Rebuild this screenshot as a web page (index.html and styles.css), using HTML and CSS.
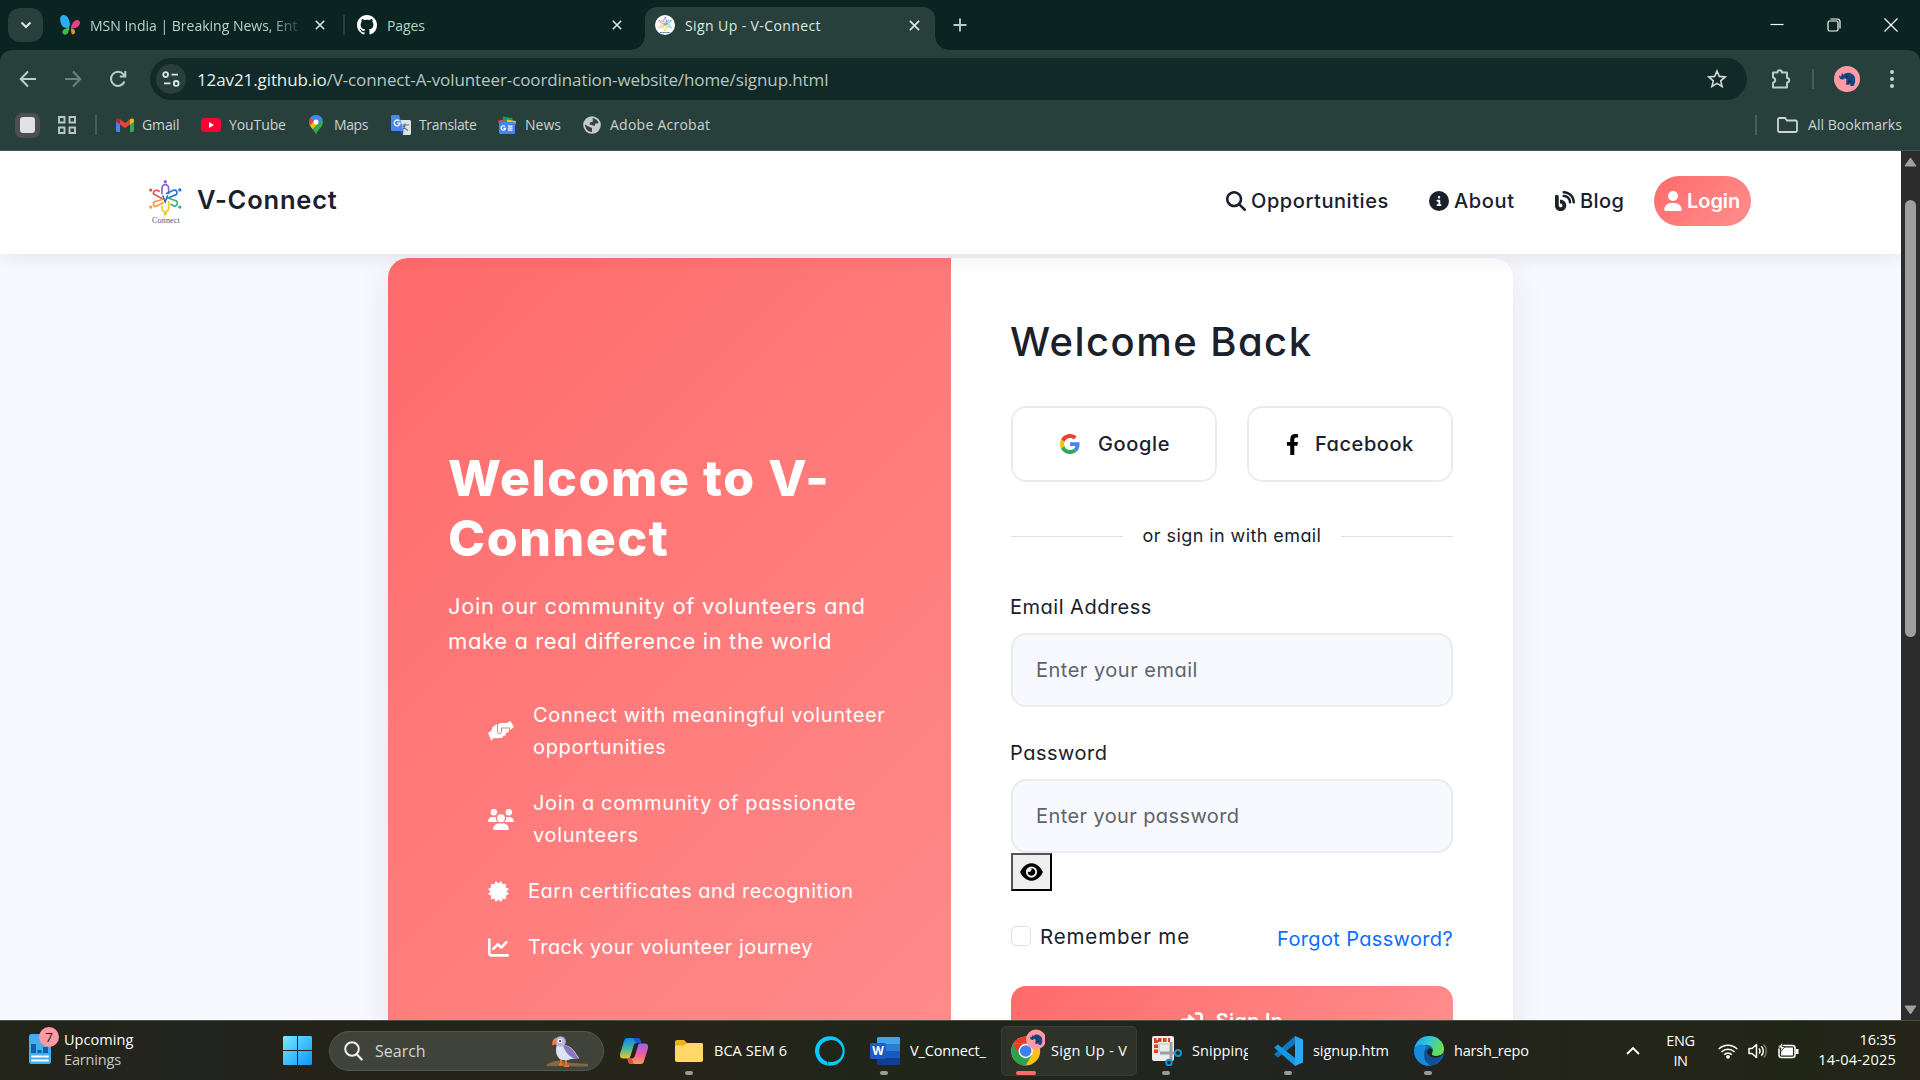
FILE: index.html
```
<!DOCTYPE html>
<html lang="en">
<head>
<meta charset="utf-8">
<title>Sign Up - V-Connect</title>
<link rel="stylesheet" href="styles.css">
</head>
<body>
<svg width="0" height="0" class="defs" aria-hidden="true">
  <defs>
    <symbol id="x" viewBox="0 0 10 10"><path d="M.8 .8 9.2 9.2M9.2 .8 .8 9.2" fill="none" stroke="currentColor" stroke-width="1.6"/></symbol>
    <symbol id="logo" viewBox="0 0 34 36">
      <g fill="none" stroke-width="1.7" stroke-linecap="round">
        <path stroke="#8d63cf" d="M14 14V8.500a3.300 3.300 0 0 1 6.600 0V14"/>
        <path stroke="#dc5750" d="M14 19 5.500 14.500A3 3 0 0 1 9 10.800l2 .8"/>
        <path stroke="#1e76d6" d="M18.500 14 26.500 10.300a2.900 2.900 0 0 1 1.800 4.700L20 18.500"/>
        <path stroke="#eda03b" d="M14.500 20 6.500 22.200a2.900 2.900 0 0 0 1 5l7.500-4"/>
        <path stroke="#3fae83" d="M20 18.500 28.500 21.500a2.900 2.900 0 0 1-2.500 5l-3-1.500"/>
        <path stroke="#efcb30" d="M14 26.500v2.500a3.300 3.300 0 0 0 6.600 0v-7"/>
        <path stroke="#295b98" stroke-width="1.400" d="M15 16.500l2.200 6 2.200-6"/>
      </g>
      <circle cx="17.300" cy="2.300" r="1.700" fill="#8d63cf"/><circle cx="2.700" cy="10.600" r="1.700" fill="#dc5750"/><circle cx="31.800" cy="10.400" r="1.700" fill="#1e76d6"/>
      <circle cx="2.700" cy="27.600" r="1.700" fill="#eda03b"/><circle cx="31.800" cy="27.600" r="1.700" fill="#3fae83"/><circle cx="17.300" cy="34.300" r="1.700" fill="#efcb30"/>
    </symbol>
    <symbol id="rhino" viewBox="0 0 26 26"><circle cx="13" cy="13" r="13" fill="#ff9ba3"/><path d="M5 9.500l2 1 1-3.500 1.500 1.700C11 6.500 15.500 5.800 18 8c3 1 3.500 5 3 8.500L19.500 20h-3l-.5-2.500-1.500 1.500-2.500-.5.500-5.500-2-.5-1.500 1C6.500 14 5 12 5 9.500z" fill="#17457f"/><path d="M12 10.500l2 .5m0 5 3-1" stroke="#0b203d"/></symbol>
  </defs>
</svg>

<div class="tabstrip">
  <div class="tab-search"><svg width="12" height="8" viewBox="0 0 12 8"><path d="M1.500 1.500 6 6l4.500-4.500" fill="none" stroke="#dfe9e5" stroke-width="2"/></svg></div>
  <div class="tab tab-first">
    <svg width="20" height="20" viewBox="0 0 20 20"><path d="M10 9C9 3 7 0 3.500 0 0 0-.5 4 .8 8c1 4 4.500 5.300 8.200 5z" fill="#28aef2"/><path d="M9.500 13C5 13 2 15 2.500 17.500 3 20 6 20.500 8 18z" fill="#41bd4c"/><path d="M11 13c.5-5 4-8.500 7-8 3 1 2.300 5-.5 7-2 1.500-4 1.500-6.500 1z" fill="#ee3f84"/><path d="M10.700 13.500c2-.5 4.500 1 4.300 3.500-.3 2.500-2.500 3-3.500 1.500z" fill="#f88b30"/></svg>
    <span class="tab-title fade">MSN India | Breaking News, Ent</span>
    <svg class="tab-x" width="10" height="10"><use href="#x"/></svg>
  </div>
  <i class="tab-sep"></i>
  <div class="tab tab-second">
    <svg width="20" height="20" viewBox="0 0 16 16" fill="#fff"><path d="M8 0C3.580 0 0 3.580 0 8c0 3.540 2.290 6.530 5.470 7.590.4.070.55-.17.55-.38 0-.19-.01-.82-.01-1.490-2.010.37-2.530-.49-2.690-.94-.09-.23-.48-.94-.82-1.130-.28-.15-.68-.52-.01-.53.63-.01 1.080.58 1.230.82.72 1.210 1.870.87 2.330.66.07-.52.28-.87.51-1.070-1.780-.2-3.640-.89-3.640-3.950 0-.87.31-1.590.82-2.150-.08-.2-.36-1.020.08-2.120 0 0 .67-.21 2.200.82.64-.18 1.320-.27 2-.27.68 0 1.360.09 2 .27 1.530-1.040 2.200-.82 2.200-.82.44 1.100.16 1.920.08 2.120.51.56.82 1.270.82 2.150 0 3.070-1.870 3.750-3.650 3.950.29.25.54.73.54 1.480 0 1.070-.01 1.930-.01 2.200 0 .21.15.46.55.38A8.013 8.013 0 0016 8c0-4.420-3.580-8-8-8z"/></svg>
    <span class="tab-title">Pages</span>
    <svg class="tab-x" width="10" height="10"><use href="#x"/></svg>
  </div>
  <div class="tab tab-active">
    <svg width="20" height="20" viewBox="0 0 20 20"><circle cx="10" cy="10" r="10" fill="#fff"/><use href="#logo" x="3" y="1.500" width="14" height="14.500"/><path d="M5 17.500h10" stroke="#7096bd"/></svg>
    <span class="tab-title">Sign Up - V-Connect</span>
    <svg class="tab-x" width="11" height="11"><use href="#x"/></svg>
  </div>
  <svg class="new-tab" width="14" height="14" viewBox="0 0 14 14"><path d="M7 .5v13M.5 7h13" stroke="#b9d3cb" stroke-width="1.800"/></svg>
  <div class="win-controls">
    <svg width="14" height="14" viewBox="0 0 14 14"><path d="M.5 6.500h13" stroke="#fff" stroke-width="1.200"/></svg>
    <svg width="14" height="14" viewBox="0 0 14 14" fill="none" stroke="#fff" stroke-width="1.200"><rect x="1" y="3" width="10" height="10" rx="1.500"/><path d="M3.500 1h7A2.500 2.500 0 0 1 13 3.500v7"/></svg>
    <svg width="14" height="14" viewBox="0 0 14 14"><path d="M.5.5l13 13M13.500.5l-13 13" stroke="#fff" stroke-width="1.200"/></svg>
  </div>
</div>

<div class="browser-bars">
  <div class="toolbar">
    <svg class="tb-icon" width="18" height="18" viewBox="0 0 18 18"><path d="M17 9H2M9 1.500 1.700 9 9 16.500" fill="none" stroke="#b4d0c8" stroke-width="2"/></svg>
    <svg class="tb-icon" width="18" height="18" viewBox="0 0 18 18"><path d="M1 9h15M9 1.500 16.300 9 9 16.500" fill="none" stroke="#6d827c" stroke-width="2"/></svg>
    <svg class="tb-icon" width="18" height="18" viewBox="0 0 18 18"><path d="M15.500 11.500A7 7 0 1 1 14.500 4.500L16 6.200M16.300 1v5.500h-5.500" fill="none" stroke="#b4d0c8" stroke-width="2"/></svg>
    <div class="omnibox">
      <div class="tune"><svg width="18" height="16" viewBox="0 0 18 16" fill="none" stroke="#dce8e4" stroke-width="1.800"><circle cx="3.600" cy="3.600" r="2.400"/><path d="M9.500 3.600H16M2 12.400h6.500"/><circle cx="14.200" cy="12.400" r="2.400"/></svg></div>
      <span class="url"><b>12av21.github.io</b>/V-connect-A-volunteer-coordination-website/home/signup.html</span>
      <svg class="star" width="20" height="20" viewBox="0 0 20 20"><path d="M10 2l2.300 5.400 5.900.5-4.500 3.900 1.400 5.700L10 14.400l-5.100 3.100 1.400-5.700L1.800 7.900l5.900-.5z" fill="none" stroke="#cfd9d6" stroke-width="1.600"/></svg>
    </div>
    <div class="tb-right">
      <svg width="22" height="22" viewBox="0 0 22 22"><path d="M3 4.500h4.500a2.200 2.200 0 0 1 4.400 0H17V10a2.200 2.200 0 0 1 0 4.400V19.500H3v-4.800a2.700 2.700 0 0 0 0-5.300z" fill="none" stroke="#b4d0c8" stroke-width="2" stroke-linejoin="round"/></svg>
      <i class="v-sep"></i>
      <svg class="avatar" width="26" height="26"><use href="#rhino"/></svg>
      <svg width="6" height="20" viewBox="0 0 6 20" fill="#c3d6d0"><circle cx="3" cy="3" r="2"/><circle cx="3" cy="10" r="2"/><circle cx="3" cy="17" r="2"/></svg>
    </div>
  </div>
  <div class="bookmarks">
    <div class="bm-square"><i></i></div>
    <svg class="bm-apps" width="18" height="18" viewBox="0 0 18 18" fill="none" stroke="#bcc8c4" stroke-width="1.900"><path d="M1 1h5.500v5.500H1zM11.500 1H17v5.500h-5.500zM1 11.500h5.500V17H1zM11.500 11.500H17V17h-5.500z"/></svg>
    <i class="v-sep"></i>
    <div class="bm bm-gmail"><svg width="18" height="14" viewBox="0 0 18 14"><path d="M0 2v10.800c0 .7.500 1.200 1.200 1.200H4V5z" fill="#4285f4"/><path d="M18 2v10.800c0 .7-.5 1.200-1.200 1.200H14V5z" fill="#34a853"/><path d="M4 1.200 9 5l5-3.800V6.500L9 10.300 4 6.500z" fill="#ea4335"/><path d="M14 1.200C16 0 18 .5 18 2.500v1L14 6.500z" fill="#fbbc04"/><path d="M4 1.200C2 0 0 .5 0 2.500v1l4 3z" fill="#c5221f"/></svg><span>Gmail</span></div>
    <div class="bm bm-youtube"><svg width="20" height="14" viewBox="0 0 20 14"><rect width="20" height="14" rx="3.500" fill="#ff0033"/><path d="M8 4v6l5-3z" fill="#fff"/></svg><span>YouTube</span></div>
    <div class="bm bm-maps"><svg width="14" height="20" viewBox="0 0 14 20"><path d="M7 20C6.300 15 0 12.500 0 7a7 7 0 0 1 14 0c0 5.500-6.300 8-7 13z" fill="#34a853"/><path d="M1.500 2.700A7 7 0 0 1 9.500.5L5 6z" fill="#1a73e8"/><path d="M1.500 2.700A7 7 0 0 0 1 10l4-4.500z" fill="#ea4335"/><path d="M1 10.200 9 3l3.500 1.500-8.800 9.500A11 11 0 0 1 1 10.200z" fill="#fbbc04"/><path d="M1.500 2.700A7 7 0 0 1 13.500 4.500L9 9 4 5z" fill="#4285f4"/><circle cx="7" cy="7" r="2.500" fill="#fff"/></svg><span>Maps</span></div>
    <div class="bm bm-translate"><svg width="20" height="20" viewBox="0 0 20 20"><path d="M7 5h11.500c.8 0 1.500.7 1.500 1.500v12c0 .8-.7 1.500-1.500 1.500H12z" fill="#dfe3e8"/><path d="M10.500 10h7.500M14 8.500V10c0 2-1.500 4-3 5m1-4c1 2 3 3.500 5 4.500" stroke="#5f6d77" fill="none" stroke-width="1.200"/><path d="M1.500 0H8l4.500 16H1.500C.7 16 0 15.300 0 14.500v-13C0 .7.700 0 1.500 0z" fill="#4688f1"/><path d="M8.500 16h4L12 20z" fill="#2256b8"/><path d="M8.300 6A2.900 2.900 0 1 0 9 8.200H6.200" stroke="#fff" fill="none" stroke-width="1.300"/></svg><span>Translate</span></div>
    <div class="bm bm-news"><svg width="18" height="19" viewBox="0 -2 18 19"><path d="M5 -1.500 14.500 0 14 6H4z" fill="#0c9d58"/><path d="M0 2.500l8-1v5H1z" fill="#ea4335"/><path d="M9 1.500l9 1.500-1 5H9z" fill="#ffc107"/><rect x="1" y="4" width="16" height="12" rx="1.500" fill="#4285f4"/><path d="M7 8.500A2.200 2.200 0 1 0 7.500 10.300H5.500M10 8.200h4.500M10 10.200h4.500M10 12.200h4.500" stroke="#fff" stroke-width="1.200" fill="none"/></svg><span>News</span></div>
    <div class="bm bm-adobe"><svg width="18" height="18" viewBox="0 0 18 18"><circle cx="9" cy="9" r="8.800" fill="#c3c9cc"/><path d="M9.500 2.200c2.500 0 5.500 2 6.200 5l-3.200.3-1 2.500-3-1-2-.5.500-2 3-1z" fill="#34433f"/><path d="M2 8.500l4.500 2.500 2.500 1v4C5 16 2 12.500 2 8.500z" fill="#34433f"/></svg><span>Adobe Acrobat</span></div>
    <div class="bm-all">
      <i class="v-sep"></i>
      <svg width="21" height="16" viewBox="0 0 21 16"><path d="M1 2.500C1 1.700 1.700 1 2.500 1H8l2 2.500h8.500c.8 0 1.500.7 1.500 1.500v8.500c0 .8-.7 1.500-1.500 1.500h-16C1.700 15 1 14.300 1 13.500z" fill="none" stroke="#cbd6d2" stroke-width="1.800"/></svg>
      <span>All Bookmarks</span>
    </div>
  </div>
</div>

<div class="viewport">
  <div class="page">
    <header class="site-header">
      <div class="brand">
        <div class="brand-mark"><svg width="34" height="37"><use href="#logo"/></svg><span>Connect</span></div>
        <span class="brand-name">V-Connect</span>
      </div>
      <nav class="site-nav">
        <a class="nav-opp"><svg width="20" height="20" viewBox="0 0 512 512"><path d="M416 208c0 45.900-14.900 88.300-40 122.700L502.600 457.400c12.500 12.500 12.500 32.800 0 45.300s-32.800 12.500-45.300 0L330.700 376c-34.400 25.200-76.800 40-122.700 40C93.100 416 0 322.900 0 208S93.100 0 208 0S416 93.100 416 208zM208 352a144 144 0 1 0 0-288 144 144 0 1 0 0 288z"/></svg><span>Opportunities</span></a>
        <a class="nav-about"><svg width="20" height="20" viewBox="0 0 512 512"><path d="M256 512A256 256 0 1 0 256 0a256 256 0 1 0 0 512zM216 336h24V272H216c-13.300 0-24-10.700-24-24s10.700-24 24-24h48c13.300 0 24 10.700 24 24v88h8c13.300 0 24 10.700 24 24s-10.700 24-24 24H216c-13.300 0-24-10.700-24-24s10.700-24 24-24zm40-208a32 32 0 1 1 0 64 32 32 0 1 1 0-64z"/></svg><span>About</span></a>
        <a class="nav-blog"><svg width="20" height="20" viewBox="0 0 512 512"><path d="M192 32c0 17.700 14.300 32 32 32c123.700 0 224 100.300 224 224c0 17.700 14.300 32 32 32s32-14.300 32-32C512 128.900 383.100 0 224 0c-17.700 0-32 14.300-32 32zm0 96c0 17.700 14.300 32 32 32c70.700 0 128 57.300 128 128c0 17.700 14.300 32 32 32s32-14.300 32-32c0-106-86-192-192-192c-17.700 0-32 14.300-32 32zM96 144c0-26.500-21.500-48-48-48S0 117.500 0 144V368c0 79.500 64.500 144 144 144s144-64.500 144-144s-64.500-144-144-144H128v96h16c26.500 0 48 21.500 48 48s-21.500 48-48 48s-48-21.500-48-48V144z"/></svg><span>Blog</span></a>
        <a class="nav-login"><svg width="18" height="20" viewBox="0 0 448 512"><path d="M224 256A128 128 0 1 0 224 0a128 128 0 1 0 0 256zm-45.700 48C79.800 304 0 383.800 0 482.300C0 498.700 13.300 512 29.700 512H418.300c16.400 0 29.700-13.300 29.700-29.700C448 383.800 368.200 304 269.700 304H178.300z"/></svg><span>Login</span></a>
      </nav>
    </header>

    <main class="card">
      <section class="intro">
        <h1>Welcome to V-<br>Connect</h1>
        <p>Join our community of volunteers and<br>make a real difference in the world</p>
        <ul>
          <li><svg width="26" height="20" viewBox="0 0 26 20"><path d="M0 12 3.500 9.500 4.500 6 9 3v7.500a2.500 2.500 0 0 0 5 0V7.500h7V10l-1 1.500-2 .5-.5 2.500-2 .5-1.500 2-9 .3L3.500 20z"/><path d="M10 3.500 12.500 2h6L22.500 0 26 6l-4 3V6.500h-9v4a1.500 1.500 0 0 1-3 0z"/></svg><span>Connect with meaningful volunteer<br>opportunities</span></li>
          <li><svg width="26" height="21" viewBox="0 0 640 512"><path d="M144 0a80 80 0 1 1 0 160A80 80 0 1 1 144 0zM512 0a80 80 0 1 1 0 160A80 80 0 1 1 512 0zM0 298.700C0 239.800 47.800 192 106.700 192h42.700c15.900 0 31 3.500 44.600 9.700c-1.300 7.200-1.900 14.700-1.900 22.300c0 38.200 16.800 72.500 43.300 96c-.2 0-.4 0-.7 0H21.300C9.600 320 0 310.400 0 298.700zM405.300 320c-.2 0-.4 0-.7 0c26.600-23.500 43.300-57.800 43.300-96c0-7.600-.7-15-1.900-22.300c13.600-6.300 28.700-9.700 44.600-9.700h42.700C592.200 192 640 239.800 640 298.700c0 11.800-9.600 21.300-21.300 21.300H405.300zM224 224a96 96 0 1 1 192 0 96 96 0 1 1 -192 0zM128 485.300C128 411.700 187.700 352 261.300 352H378.700C452.300 352 512 411.700 512 485.300c0 14.700-11.900 26.700-26.700 26.700H154.700c-14.700 0-26.700-11.900-26.700-26.700z"/></svg><span>Join a community of passionate<br>volunteers</span></li>
          <li><svg width="21" height="21" viewBox="-10.500 -10.500 21 21"><path transform="rotate(15)" stroke="#fff" stroke-width=".8" stroke-linejoin="round" d="M0-10.200 2.020-7.530 5.100-8.830 5.520-5.520 8.830-5.100 7.530-2.020 10.200 0 7.530 2.020 8.830 5.100 5.520 5.520 5.100 8.830 2.020 7.530 0 10.200-2.020 7.530-5.100 8.830-5.520 5.520-8.830 5.100-7.530 2.020-10.200 0-7.530-2.020-8.830-5.100-5.520-5.520-5.100-8.830-2.020-7.530z"/></svg><span class="short">Earn certificates and recognition</span></li>
          <li><svg width="21" height="21" viewBox="0 0 512 512"><path d="M64 64c0-17.700-14.300-32-32-32S0 46.300 0 64V400c0 44.200 35.800 80 80 80H480c17.700 0 32-14.300 32-32s-14.300-32-32-32H80c-8.800 0-16-7.200-16-16V64zm406.600 86.600c12.500-12.500 12.500-32.800 0-45.300s-32.800-12.500-45.300 0L320 210.700l-57.400-57.400c-12.500-12.500-32.800-12.500-45.300 0l-112 112c-12.500 12.500-12.500 32.800 0 45.300s32.800 12.500 45.300 0L240 221.300l57.400 57.400c12.500 12.500 32.800 12.500 45.300 0l128-128z"/></svg><span class="short">Track your volunteer journey</span></li>
        </ul>
      </section>

      <section class="form">
        <h2>Welcome Back</h2>
        <div class="social">
          <div class="social-btn google"><svg width="20" height="20" viewBox="0 0 48 48"><path fill="#EA4335" d="M24 9.500c3.540 0 6.710 1.220 9.210 3.600l6.850-6.850C35.900 2.380 30.470 0 24 0 14.620 0 6.510 5.380 2.560 13.220l7.980 6.190C12.430 13.720 17.740 9.500 24 9.500z"/><path fill="#4285F4" d="M46.980 24.550c0-1.570-.15-3.090-.38-4.550H24v9.020h12.940c-.58 2.960-2.260 5.480-4.780 7.180l7.730 6c4.510-4.180 7.090-10.360 7.090-17.650z"/><path fill="#FBBC05" d="M10.530 28.590c-.48-1.450-.76-2.990-.76-4.590s.27-3.140.76-4.590l-7.980-6.190C.92 16.460 0 20.120 0 24c0 3.880.92 7.540 2.560 10.780l7.970-6.190z"/><path fill="#34A853" d="M24 48c6.480 0 11.930-2.130 15.890-5.810l-7.730-6c-2.150 1.450-4.920 2.300-8.160 2.300-6.260 0-11.570-4.220-13.470-9.910l-7.980 6.190C6.510 42.620 14.620 48 24 48z"/></svg><span>Google</span></div>
          <div class="social-btn facebook"><svg width="13" height="21" viewBox="0 0 320 512"><path d="M279.140 288l14.220-92.660h-88.910v-60.130c0-25.350 12.420-50.060 52.240-50.060h40.420V6.260S260.430 0 225.360 0c-73.220 0-121.080 44.380-121.080 124.720v70.620H22.890V288h81.390v224h100.170V288z"/></svg><span>Facebook</span></div>
        </div>
        <div class="divider"><i></i><span>or sign in with email</span><i></i></div>
        <label>Email Address</label>
        <div class="field"><span class="ph-email">Enter your email</span></div>
        <label>Password</label>
        <div class="field field-password"><span class="ph-pass">Enter your password</span></div>
        <div class="eye-btn"><svg width="23" height="20" viewBox="0 0 576 512"><path d="M288 32c-80.800 0-145.500 36.800-192.600 80.600C48.600 156 17.300 208 2.500 243.700c-3.300 7.900-3.300 16.700 0 24.600C17.300 304 48.600 356 95.400 399.400C142.500 443.200 207.200 480 288 480s145.500-36.800 192.600-80.600c46.800-43.500 78.100-95.400 93-131.100c3.300-7.900 3.300-16.700 0-24.600c-14.900-35.700-46.200-87.700-93-131.100C433.500 68.800 368.800 32 288 32zM144 256a144 144 0 1 1 288 0 144 144 0 1 1 -288 0zm144-64c0 35.300-28.700 64-64 64c-7.100 0-13.900-1.200-20.300-3.300c-5.500-1.800-11.900 1.600-11.700 7.400c.3 6.900 1.300 13.800 3.200 20.700c13.700 51.200 66.400 81.600 117.600 67.900s81.600-66.400 67.900-117.600c-11.100-41.500-47.800-69.400-88.600-71.100c-5.800-.2-9.200 6.100-7.400 11.700c2.100 6.400 3.300 13.200 3.300 20.300z"/></svg></div>
        <div class="options"><span class="remember"><i></i>Remember me</span><a class="forgot">Forgot Password?</a></div>
        <div class="submit"><svg width="22" height="20" viewBox="0 0 512 512" preserveAspectRatio="none"><path d="M217.900 105.900L340.700 228.700c7.200 7.200 11.300 17.100 11.300 27.300s-4.100 20.100-11.300 27.300L217.900 406.100c-6.400 6.400-15 9.900-24 9.900c-18.700 0-33.900-15.200-33.900-33.900l0-62.100L32 320c-17.700 0-32-14.300-32-32l0-64c0-17.700 14.300-32 32-32l128 0 0-62.100c0-18.700 15.200-33.900 33.900-33.900c9 0 17.600 3.600 24 9.900zM352 416l64 0c17.700 0 32-14.300 32-32l0-256c0-17.700-14.300-32-32-32l-64 0c-17.700 0-32-14.300-32-32s14.300-32 32-32l64 0c53 0 96 43 96 96l0 256c0 53-43 96-96 96l-64 0c-17.700 0-32-14.300-32-32s14.300-32 32-32z"/></svg><span>Sign In</span></div>
      </section>
    </main>
  </div>
  <div class="scrollbar">
    <svg width="13" height="10" viewBox="0 0 13 10"><path d="M6.500 1 12 9H1z" fill="#a0a0a0" stroke="#a0a0a0" stroke-linejoin="round"/></svg>
    <i class="thumb"></i>
    <svg width="13" height="10" viewBox="0 0 13 10"><path d="M6.500 9 12 1H1z" fill="#a0a0a0" stroke="#a0a0a0" stroke-linejoin="round"/></svg>
  </div>
</div>

<footer class="taskbar">
  <div class="widget">
    <div class="widget-icon"><svg width="22" height="30" viewBox="0 0 22 30"><rect width="22" height="30" rx="2.500" fill="#45aef0"/><path d="M2 10h5v9H2zM8.500 16h4v3h-4zM14 13h5v6h-5z" fill="#125fa8"/><path d="M3 22.500h10M15 22.500h4M3 26.500h16" stroke="#fff" stroke-width="2" stroke-linecap="round"/></svg><b>7</b></div>
    <div class="widget-text"><span>Upcoming</span><span class="dim">Earnings</span></div>
  </div>
  <svg class="start" width="29" height="29" viewBox="0 0 29 29"><defs><linearGradient id="win" x2="1" y2="1"><stop stop-color="#79eaff"/><stop offset="1" stop-color="#0a95fa"/></linearGradient></defs><path d="M0 1.500C0 .5.500 0 1.500 0H14v14H0zM15 0h12.500c1 0 1.500.5 1.500 1.500V14H15zM0 15h14v14H1.500C.5 29 0 28.500 0 27.500zM15 15h14v12.500c0 1-.5 1.500-1.500 1.500H15z" fill="url(#win)"/></svg>
  <div class="search">
    <svg width="19" height="20" viewBox="0 0 19 20"><circle cx="8" cy="8" r="6.800" fill="none" stroke="#f0f0ec" stroke-width="2"/><path d="M13 13.500l4.700 5" stroke="#f0f0ec" stroke-width="2.200" stroke-linecap="round"/></svg>
    <span>Search</span>
    <svg class="bird" width="43" height="31" viewBox="0 0 43 31"><path d="M0 30c3-4 10-6 17-5l8 2 17 1v2.500z" fill="#846949"/><path d="M15 23v5M20 23v6M13 28.500h4M18 30h5" stroke="#ff6b20" stroke-width="2"/><path d="M18 9c6 0 10 5 15 13l-8 1c-4 2-11 2-13-2-3-5-2-9-1-13z" fill="#dce3f4"/><path d="M17 9c7 0 10 5 16 14-8 0-14-6-16-14z" fill="#8b75b9"/><circle cx="14.500" cy="5.500" r="5.300" fill="#b7b4df"/><path d="M10 1.500C7 3 5.500 6 6.500 9.500L10.500 8z" fill="#ff7841"/><circle cx="14" cy="5" r="2.300" fill="#fff"/><circle cx="14" cy="5" r="1.100" fill="#2c2846"/></svg>
  </div>
  <svg class="copilot" width="28" height="26" viewBox="0 0 28 26"><defs><linearGradient id="ca" x2="0" y2="1"><stop stop-color="#1584e8"/><stop offset=".5" stop-color="#3cb7a8"/><stop offset="1" stop-color="#f4c522"/></linearGradient><linearGradient id="cb" x2="0" y2="1"><stop stop-color="#9a63ed"/><stop offset=".5" stop-color="#ee5ba2"/><stop offset="1" stop-color="#ff9a55"/></linearGradient></defs><path d="M7 0h10c2 0 3 1 3.500 3l.5 2h-4c-2 0-3 1-3.500 3l-3 10c-.6 2-1.500 2.500-3 2.500H3C0 20.500-.5 18 .3 15L4 3c.6-2 1.500-3 3-3z" fill="url(#ca)"/><path d="M17 0c2 0 3 1 3.500 3l.5 2h-5l-3-5z" fill="#155bd0"/><path d="M20 5.500h5c3 0 3.500 2.500 2.700 5.500L24 23c-.6 2-1.500 3-3 3H11.500c-2 0-3-1-3.500-3l-.5-2.500h4c2 0 3-1 3.500-3l3-10c.4-1.400 1-2 2-2z" fill="url(#cb)"/><path d="M7.500 20.500h4l2.500 5.500h-2.500c-2 0-3-1-3.500-3z" fill="#e94e2e"/></svg>
  <div class="task t-folder"><svg width="28" height="22" viewBox="0 0 28 22"><path d="M0 2C0 .8.800 0 2 0h7l3 3-2 5H0z" fill="#f5ad1d"/><path d="M0 7c0-1 .5-1.500 1.500-1.500H9L12 3h14.500c1 0 1.500.5 1.500 1.500V20c0 1.200-.8 2-2 2H2c-1.200 0-2-.8-2-2z" fill="#ffd866"/></svg><span>BCA SEM 6</span><i class="dot"></i></div>
  <svg class="alexa" width="30" height="30" viewBox="0 0 30 30"><path d="M15 .3a14.700 14.700 0 0 1 0 29.400h-1.700l-.3-4.200A11 11 0 1 0 15 4.200a10.800 10.800 0 0 0-3 21.200l1 4.200A14.700 14.700 0 0 1 15 .3z" fill="#05caff"/></svg>
  <div class="task t-word"><svg width="30" height="28" viewBox="0 0 30 28"><path d="M9 0h19.500C29.500 0 30 .5 30 1.500V7H7V2c0-1.200.8-2 2-2z" fill="#41a5ee"/><path d="M7 7h23v7H7z" fill="#2b7cd3"/><path d="M7 14h23v7H7z" fill="#185abd"/><path d="M7 21h23v5.500c0 1-.5 1.500-1.500 1.500H9c-1.200 0-2-.8-2-2z" fill="#103f91"/><rect y="6" width="16" height="16" rx="1.500" fill="#1d5cc4"/><text x="8" y="18" text-anchor="middle" class="w-letter">W</text></svg><span>V_Connect_</span><i class="dot"></i></div>
  <div class="task t-chrome"><svg width="34" height="38" viewBox="0 0 34 38"><circle cx="14.700" cy="23" r="14.500" fill="#fbc116"/><path d="M2.200 15.700A14.500 14.500 0 0 1 27.300 15.700H14.700z" fill="#e63c30"/><path d="M2.200 15.700A14.500 14.500 0 0 0 14.700 37.500L21 26.600 14.700 23z" fill="#2da14c"/><path d="M2.200 15.700 8.400 26.600 14.700 15.700z" fill="#e63c30"/><circle cx="14.700" cy="23" r="7.200" fill="#fff"/><circle cx="14.700" cy="23" r="5.800" fill="#3c82ef"/><use href="#rhino" x="15" y="-.5" width="20" height="24"/></svg><span>Sign Up - V</span><i class="dot bar"></i></div>
  <div class="task t-snip"><svg width="30" height="30" viewBox="0 0 30 30"><rect width="22" height="25" rx="2" fill="#ececec"/><path d="M4 17V4h14" fill="none" stroke="#dc4317" stroke-width="4" stroke-dasharray="3.500 1.500"/><path d="M7 16V8h9" fill="none" stroke="#c2c2c2"/><path d="M19 6v18M8 17h16" stroke="#9b9fa3" stroke-width="3"/><circle cx="26" cy="17" r="3" fill="none" stroke="#1591d8" stroke-width="2"/><circle cx="17" cy="26.500" r="2.800" fill="none" stroke="#1591d8" stroke-width="2"/></svg><span>Snipping</span><i class="dot"></i></div>
  <div class="task t-code"><svg width="30" height="30" viewBox="0 0 30 30"><path d="M21 0l8 3.500v23L21 30z" fill="#28a9f4"/><path d="M21 0v8L4 21.500 0 18.500z" fill="#0e79bf"/><path d="M21 30v-8L4 8.500 0 11.500z" fill="#1596de"/></svg><span>signup.htm</span><i class="dot"></i></div>
  <div class="task t-edge"><svg width="30" height="30" viewBox="0 0 30 30"><defs><linearGradient id="eg" x2="1" y2=".4"><stop stop-color="#1d9be6"/><stop offset=".5" stop-color="#35c6d8"/><stop offset="1" stop-color="#66df50"/></linearGradient></defs><circle cx="15" cy="15" r="15" fill="#0d67bd"/><path d="M.3 13C2 4 8 0 15 0c9 0 15 6 15 13 0 5-4 7-8 7-3.500 0-5-1-4-3 3-5-2-9-7-8S1 10 .3 13z" fill="url(#eg)"/><path d="M.3 13C4 7 11 8 12.500 11 8 15 10 22 17 28.500l-2 1.500A15 15 0 0 1 .3 13z" fill="#168bdc"/><path d="M12.500 12.500c-1 6 6 10.500 15 8-2 5-7 9.500-12 8.500-6-4-7-11-3-16.500z" fill="#104f98"/><path d="M14 13c3-2 6 1 4 4-1 2 1 3 4 3 3 0 6-1 7-3 .5 3-6 6-11 4s-6-5-4-8z" fill="#20251a"/></svg><span>harsh_repo</span><i class="dot"></i></div>
  <div class="tray">
    <svg class="chev" width="14" height="9" viewBox="0 0 14 9"><path d="M1 8l6-6 6 6" fill="none" stroke="#fff" stroke-width="1.900"/></svg>
    <div class="lang"><span>ENG</span><span>IN</span></div>
    <svg class="wifi" width="20" height="16" viewBox="0 0 20 16"><g fill="none" stroke="#fff" stroke-width="1.600"><path d="M.8 6a13 13 0 0 1 18.400 0M3.500 9a9.200 9.200 0 0 1 13 0M6.200 11.700a5.300 5.300 0 0 1 7.600 0"/></g><circle cx="10" cy="13.800" r="1.900" fill="#fff"/></svg>
    <svg class="vol" width="20" height="16" viewBox="0 0 20 16" fill="none" stroke="#fff" stroke-width="1.500"><path d="M1 5.500h3L8.500 1.500v13L4 10.500H1z" stroke-linejoin="round"/><path d="M11 5.500a3.500 3.500 0 0 1 0 5M13.300 3.300a6.500 6.500 0 0 1 0 9.400"/><path d="M15.800 1.500a9.500 9.500 0 0 1 0 13" stroke="#777970"/></svg>
    <svg class="bat" width="21" height="17" viewBox="0 0 21 17"><rect x="1" y="3.500" width="16" height="12" rx="2.500" fill="none" stroke="#fff" stroke-width="1.600"/><rect x="3" y="5.500" width="12" height="8" fill="#fff"/><path d="M18 7h2.500v5H18z" fill="#fff"/><path d="M4.500 0 0 6h3l-.5 4L7 4.500H4z" fill="#fff" stroke="#23271a" stroke-width=".8"/></svg>
    <div class="clock"><span class="time">16:35</span><span>14-04-2025</span></div>
  </div>
</footer>
</body>
</html>
```
FILE: styles.css
```
* { box-sizing: border-box; }
body { margin: 0; width: 1920px; height: 1080px; overflow: hidden; display: flex; flex-direction: column; background: #0a2421; font-family: "Open Sans", sans-serif; font-size: 14px; color: #fff; white-space: nowrap; }
svg { display: block; flex: none; }
.defs { position: absolute; }
i { flex: none; }

/* tab strip */
.tabstrip { height: 50px; flex: none; display: flex; align-items: center; padding: 0 22px 0 8px; background: #0a2421; }
.tab-search { width: 35px; height: 34px; border-radius: 12px; background: #28403b; display: flex; align-items: center; justify-content: center; }
.tab { display: flex; align-items: center; color: #b9d3cb; height: 34px; }
.tab-title { margin-left: 10px; flex: 1; letter-spacing: -0.1px; }
.tab-x { color: #dce8e4; }
.tab-first { width: 265px; margin-left: 17px; }
.tab-first .tab-title { flex: none; width: 210px; margin-right: 15px; letter-spacing: 0; }
.fade { -webkit-mask-image: linear-gradient(90deg, #000 180px, transparent 214px); mask-image: linear-gradient(90deg, #000 180px, transparent 214px); }
.tab-sep { width: 2px; height: 20px; margin: 0 12px 0 18px; background: #28403b; }
.tab-second { width: 265px; }
.tab-active { position: relative; width: 290px; height: 43px; margin: 7px 0 0 23px; padding: 0 15px 7px 10px; background: #28403b; border-radius: 12px 12px 0 0; color: #dfe9e5; }
.tab-active .tab-title { letter-spacing: 0.4px; }
.tab-active::before, .tab-active::after { content: ""; position: absolute; bottom: 0; width: 14px; height: 14px; }
.tab-active::before { left: -14px; background: radial-gradient(circle at 0 0, transparent 13.5px, #28403b 14px); }
.tab-active::after { right: -14px; background: radial-gradient(circle at 100% 0, transparent 13.5px, #28403b 14px); }
.new-tab { margin-left: 18px; }
.win-controls { margin-left: auto; display: flex; gap: 43px; }

/* toolbar and bookmarks */
.browser-bars { height: 101px; flex: none; background: #28403b; border-radius: 12px 12px 0 0; border-bottom: 1px solid #48544f; }
.toolbar { height: 50px; padding: 8px 25px 0 19px; display: flex; align-items: center; }
.tb-icon { margin-right: 27px; }
.omnibox { width: 1597px; height: 42px; margin-left: -4px; border-radius: 21px; background: #112a27; display: flex; align-items: center; padding: 0 20px 0 6px; }
.tune { width: 30px; height: 30px; border-radius: 50%; background: #28403b; display: flex; align-items: center; justify-content: center; }
.url { margin-left: 11px; font-size: 17px; letter-spacing: -0.1px; color: #b8c6c2; }
.url b { font-weight: 400; color: #e8f1ee; }
.star { margin-left: auto; }
.tb-right { margin-left: auto; display: flex; align-items: center; }
.v-sep { width: 2px; height: 20px; background: #42605a; }
.tb-right .v-sep { margin: 0 20px; }
.avatar { margin-right: 29px; }
.bookmarks { height: 50px; display: flex; align-items: center; padding: 0 18px 0 15px; color: #cbd3d1; letter-spacing: -0.4px; }
.bookmarks span { padding-bottom: 2px; }
.bm-square { width: 25px; height: 25px; border-radius: 7px; background: #4c4e50; display: flex; align-items: center; justify-content: center; }
.bm-square i { width: 15px; height: 16px; border-radius: 3px; background: #dfe1e6; }
.bm-apps { margin: 0 19px 0 18px; }
.bm { display: flex; align-items: center; gap: 8px; }
.bm-gmail { width: 85px; margin-left: 19px; letter-spacing: -0.1px; }
.bm-youtube { width: 107px; letter-spacing: -0.1px; }
.bm-maps { width: 82px; gap: 11px; margin-left: 1px; }
.bm-translate { width: 107px; letter-spacing: -0.35px; }
.bm-news { width: 85px; gap: 9px; letter-spacing: 0; }
.bm-adobe { gap: 9px; letter-spacing: 0.25px; }
.bm-all { margin-left: auto; display: flex; align-items: center; width: 147px; letter-spacing: 0.05px; }
.bm-all svg { margin: 0 10px 0 20px; }

/* page */
.viewport { height: 869px; flex: none; display: flex; overflow: hidden; font-family: Inter, sans-serif; font-feature-settings: "cv11"; color: #1a202c; font-size: 20px; }
.page { width: 1901px; background: #f8f9fe; overflow: hidden; }
.site-header { position: relative; z-index: 1; height: 103px; background: #fff; box-shadow: 0 3px 18px rgba(30, 35, 70, 0.09); display: flex; align-items: center; justify-content: space-between; padding: 0 150px 0 148px; }
.brand { display: flex; align-items: center; gap: 15px; padding-bottom: 2px; }
.brand-mark { width: 34px; display: flex; flex-direction: column; align-items: center; }
.brand-mark span { font: 8px/9px "Liberation Serif", serif; letter-spacing: 0.2px; color: #3c5b85; padding-left: 2px; }
.brand-name { font-size: 25.5px; font-weight: 600; letter-spacing: 0.8px; padding-bottom: 4px; }
.site-nav { display: flex; align-items: center; font-weight: 500; padding-bottom: 3px; }
.site-nav a { display: flex; align-items: center; gap: 5px; }
.site-nav svg { fill: currentColor; }
.nav-opp { width: 203px; letter-spacing: 0.56px; }
.nav-about { width: 126px; letter-spacing: 0.65px; }
.nav-blog { width: 99px; letter-spacing: 0.4px; }
.site-nav .nav-login { width: 97px; height: 50px; padding-left: 10px; border-radius: 25px; background: linear-gradient(135deg, #ff6b6b, #ff8e8e); color: #fff; font-weight: 600; letter-spacing: -0.05px; }

.card { width: 1125px; height: 924px; margin: 4px 0 0 388px; border-radius: 20px; overflow: hidden; background: #fff; display: flex; box-shadow: 0 12px 34px rgba(30, 35, 70, 0.09); }
.intro { width: 563px; padding: 190px 60px 0; background: linear-gradient(135deg, #ff6b6b, #ff8e8e); color: #fff; }
.intro h1 { margin: 0 0 21px; font-size: 50px; line-height: 60px; font-weight: 800; letter-spacing: 1.55px; }
.intro p { margin: 0 0 40px; font-size: 22px; line-height: 35px; letter-spacing: 0.62px; }
.intro ul { margin: 0; padding: 0 0 0 40px; list-style: none; display: flex; flex-direction: column; gap: 24px; line-height: 32px; letter-spacing: 0.65px; }
.intro li { display: flex; align-items: center; gap: 19px; }
.intro li svg { fill: currentColor; }
.intro .short { letter-spacing: 0.46px; }

.form { width: 562px; padding: 60px; display: flex; flex-direction: column; }
.form h2 { margin: 0 0 40px -1px; font-size: 40px; line-height: 48px; font-weight: 500; letter-spacing: 1.45px; }
.social { display: flex; justify-content: space-between; }
.social-btn { width: 206px; height: 76px; border: 2px solid #e9ecef; border-radius: 15px; display: flex; align-items: center; font-weight: 500; }
.google { padding-left: 47px; gap: 18px; letter-spacing: 0.64px; }
.facebook { padding-left: 37px; gap: 16px; letter-spacing: 0.54px; }
.divider { height: 28px; margin: 39px 0 43px; display: flex; align-items: center; gap: 20px; font-size: 18px; letter-spacing: 0.42px; }
.divider i { flex: 1; height: 1px; margin-top: 2px; background: #dee2e6; }
.form label { line-height: 30px; margin: 0 0 11px -1px; letter-spacing: 0.5px; }
.field { height: 74px; border: 2px solid #e9ecef; border-radius: 15px; background: #f8f9fe; display: flex; align-items: center; padding-left: 23px; color: #5d6369; margin-bottom: 31px; }
.form .field-password { margin: 0; }
.ph-email { letter-spacing: 0.5px; }
.ph-pass { letter-spacing: 0.4px; }
.eye-btn { width: 41px; height: 38px; border: 2px solid; border-color: #555 #000 #000 #555; background: #efefef; color: #000; display: flex; align-items: center; justify-content: center; }
.options { height: 30px; margin: 30px 0 35px; display: flex; align-items: center; justify-content: space-between; }
.remember { display: flex; align-items: center; font-size: 20.5px; letter-spacing: 0.85px; }
.remember i { width: 20px; height: 20px; margin-right: 9px; border: 1px solid #dee2e6; border-radius: 5px; }
.forgot { color: #0d6efd; letter-spacing: 0.35px; padding-top: 5px; }
.submit { height: 70px; border-radius: 15px; background: linear-gradient(135deg, #ff6b6b, #ff8e8e); color: #fff; display: flex; align-items: center; justify-content: center; gap: 13px; font-weight: 600; font-size: 19.5px; letter-spacing: 0.47px; }
.submit svg { fill: currentColor; }

.scrollbar { width: 19px; background: #2c2c2c; display: flex; flex-direction: column; align-items: center; justify-content: space-between; padding: 6px 0 5px; }
.scrollbar .thumb { width: 11px; height: 437px; margin-bottom: 335px; border-radius: 6px; background: #9f9f9f; }

/* taskbar */
.taskbar { height: 60px; flex: none; border-top: 1px solid #4a4f45; background: linear-gradient(90deg, #23251a 0, #22241f 200px, #242319 340px, #262519 680px, #20251a 920px, #22251f 1200px, #20231f 1320px, #242519 1600px, #212516 1800px, #25251a 1920px); display: flex; align-items: center; font-size: 14.5px; }
.widget { display: flex; width: 254px; margin-left: 29px; }
.widget-icon { position: relative; width: 35px; padding-top: 4px; }
.widget-icon b { position: absolute; left: 10px; top: -3px; width: 20px; height: 20px; border-radius: 50%; background: #ff99a4; color: #1c1717; font-size: 13.5px; font-weight: 400; line-height: 20px; text-align: center; }
.widget-text { display: flex; flex-direction: column; line-height: 20px; letter-spacing: 0.05px; padding-bottom: 2px; }
.dim { color: #c9cac5; letter-spacing: -0.15px; }
.search { width: 275px; height: 40px; margin-left: 17px; padding: 0 14px; border: 1px solid #54564d; border-radius: 20px; background: #40433a; display: flex; align-items: center; font-size: 16px; color: #d4d5d0; letter-spacing: 0; }
.search span { margin-left: 12px; }
.bird { margin: 2px 0 0 auto; }
.copilot { margin-left: 16px; }
.task { position: relative; height: 50px; display: flex; align-items: center; gap: 10px; }
.dot { position: absolute; left: 10px; bottom: 1px; width: 8px; height: 4px; border-radius: 2px; background: #9a9b94; }
.t-folder { width: 112px; margin-left: 27px; gap: 11px; letter-spacing: 0.05px; }
.alexa { margin: 0 25px 0 28px; }
.t-word { width: 119px; letter-spacing: -0.15px; }
.t-chrome { width: 136px; margin-left: 12px; padding-left: 9px; gap: 6px; border: 1px solid #393c32; border-radius: 5px; background: #2f3229; letter-spacing: 0.35px; }
.t-chrome svg { margin-top: -8px; }
.bar { left: 14px; bottom: 0; width: 20px; background: #ff6b66; }
.t-snip { width: 96px; margin-left: 15px; overflow: hidden; letter-spacing: 0.05px; }
.t-code { margin-left: 26px; width: 115px; gap: 9px; letter-spacing: -0.05px; }
.t-edge { margin-left: 25px; letter-spacing: -0.2px; }
.w-letter { font: bold 12px "Open Sans", sans-serif; fill: #fff; letter-spacing: 0; }
.tray { margin-left: auto; display: flex; align-items: center; padding-right: 24px; line-height: 20px; }
.lang { width: 29px; margin: 0 23px 0 26px; display: flex; flex-direction: column; align-items: center; letter-spacing: -0.4px; }
.wifi { margin-right: 10px; }
.vol { margin-right: 10px; }
.clock { width: 78px; margin-left: 19px; display: flex; flex-direction: column; align-items: flex-end; letter-spacing: 0.2px; padding-bottom: 2px; }
.time { letter-spacing: -0.1px; }
```
